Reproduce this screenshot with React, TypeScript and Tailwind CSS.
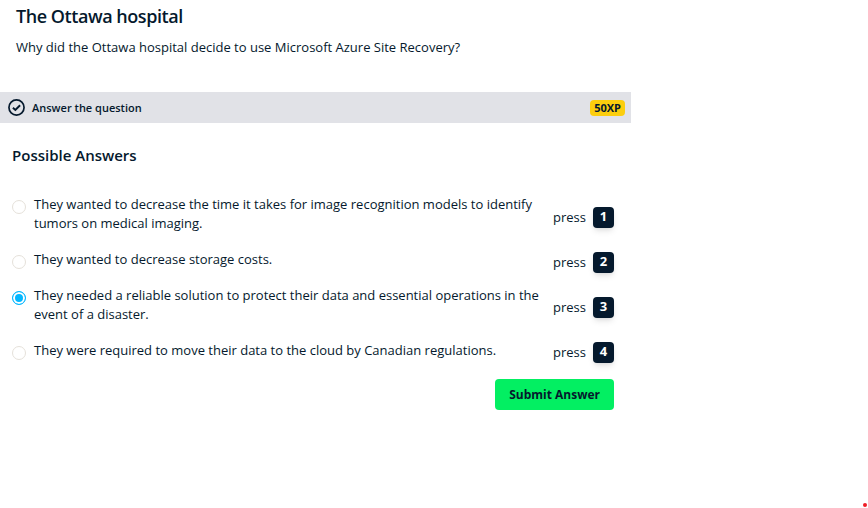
import { useState } from "react";

const answers = [
  "They wanted to decrease the time it takes for image recognition models to identify tumors on medical imaging.",
  "They wanted to decrease storage costs.",
  "They needed a reliable solution to protect their data and essential operations in the event of a disaster.",
  "They were required to move their data to the cloud by Canadian regulations.",
];

function CheckCircle() {
  return (
    <svg className="size-[17px] shrink-0" viewBox="0 0 18 18" fill="none" stroke="currentColor" strokeWidth="2" aria-hidden="true">
      <circle cx="9" cy="9" r="8" strokeWidth="1.8" />
      <path d="M5.2 9.2l2.6 2.4 5-5" />
    </svg>
  );
}

export default function App() {
  const [selected, setSelected] = useState(2);

  return (
    <div className="flex min-h-screen flex-col bg-white font-[Open_Sans,sans-serif] text-[13px] leading-[19px] font-medium text-[#05192d]">
      <main className="w-full max-w-[631px]">
        <header className="px-4 pt-1">
          <h1 className="text-lg leading-6 font-semibold tracking-tight">The Ottawa hospital</h1>
          <p className="mt-2.5 pb-[35px]">Why did the Ottawa hospital decide to use Microsoft Azure Site Recovery?</p>
        </header>

        <div className="flex h-[31px] items-center gap-[7px] bg-[#e1e2e7] pr-1.5 pl-2">
          <CheckCircle />
          <h2 className="flex-1 text-[11px] leading-4 font-semibold">Answer the question</h2>
          <strong className="rounded-sm bg-[#fcce0d] px-1 text-[11px] leading-4 font-bold">50XP</strong>
        </div>

        <form className="pr-[17px] pl-3" onSubmit={(event) => event.preventDefault()}>
          <h3 id="answers-title" className="mt-5 mb-7 text-[15px] leading-6 font-semibold">Possible Answers</h3>
          <div className="flex gap-2">
            <div role="radiogroup" aria-labelledby="answers-title" className="flex min-w-0 flex-1 flex-col gap-[17px]">
              {answers.map((answer, index) => (
                <label key={answer} className="flex items-start gap-2">
                  <input
                    type="radio"
                    name="answer"
                    checked={selected === index}
                    onChange={() => setSelected(index)}
                    className="mt-[5px] size-3.5 shrink-0 appearance-none rounded-full border border-[#e5e1da] bg-white checked:border-[#03b7ff] checked:bg-[#03b7ff] checked:shadow-[inset_0_0_0_2px_white]"
                  />
                  <span>{answer}</span>
                </label>
              ))}
            </div>
            <div className="flex flex-col">
              {answers.map((answer, index) => (
                <div key={answer} className="flex h-[45px] items-center gap-[7px]">
                  <span>press</span>
                  <kbd className="h-[21px] w-[21px] rounded-sm bg-[#05192d] text-center font-[Open_Sans,sans-serif] text-[13px] leading-[19px] font-bold text-white shadow-md">
                    {index + 1}
                  </kbd>
                </div>
              ))}
            </div>
          </div>
          <div className="mt-1 flex justify-end">
            <button type="submit" className="h-[31px] rounded-sm bg-[#03ef62] px-3.5 text-xs font-bold">
              Submit Answer
            </button>
          </div>
        </form>
      </main>
      <span className="mt-auto mr-px mb-px size-1 self-end rounded-full bg-[#ef1c24]" />
    </div>
  );
}
